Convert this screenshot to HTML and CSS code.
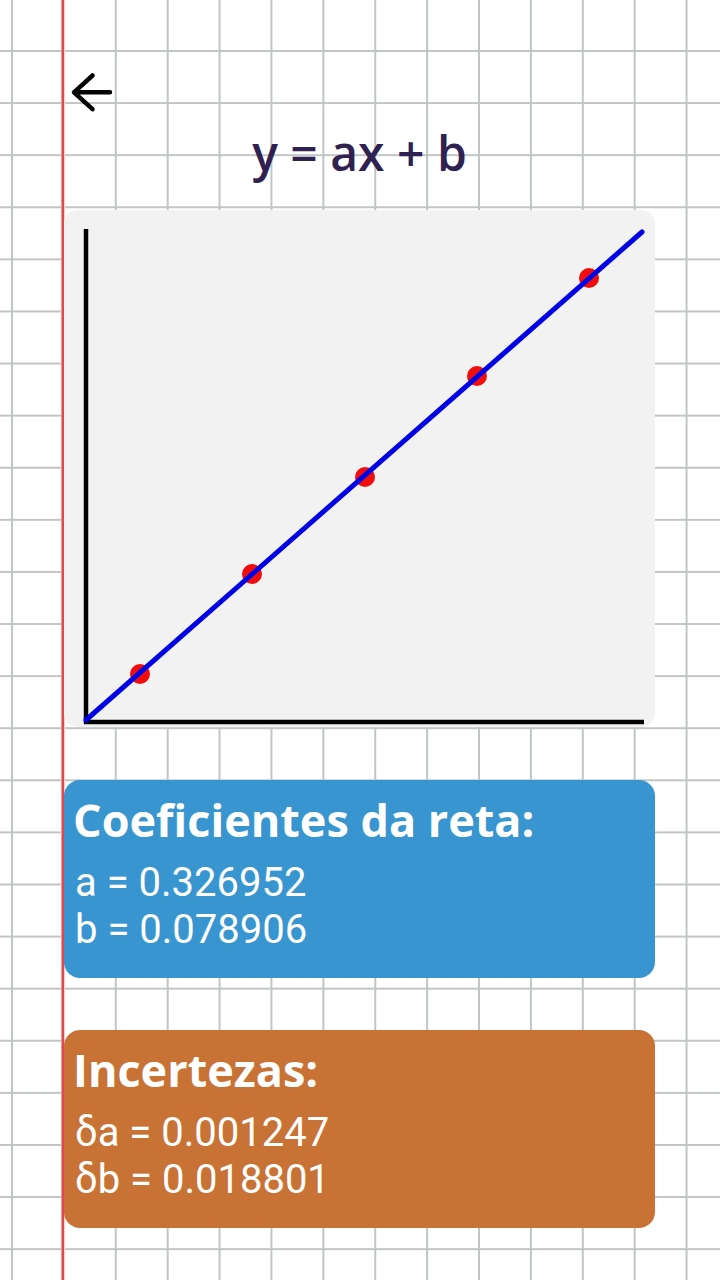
FILE: index.html
```html
<!DOCTYPE html>
<html lang="pt">
<head>
<meta charset="utf-8">
<title>y = ax + b</title>
<link rel="stylesheet" href="styles.css">
</head>
<body>
<div class="page">
  <div class="topbar">
    <svg class="back" width="48" height="48" viewBox="0 0 48 48" aria-label="Voltar">
      <path d="M42 24.3H6 M24.5 7.5L6 24.3L24.5 41.2" fill="none" stroke="#000" stroke-width="4.5" stroke-linecap="round" stroke-linejoin="round"/>
    </svg>
  </div>
  <h1 class="title">y = ax + b</h1>
  <div class="chart-card">
    <svg class="chart" width="591" height="517" viewBox="0 0 591 517">
      <line x1="22" y1="19" x2="22" y2="514" stroke="#000" stroke-width="4.5"/>
      <line x1="20" y1="512" x2="580" y2="512" stroke="#000" stroke-width="4.5"/>
      <g fill="#f20d0d">
        <circle cx="76" cy="464" r="10"/>
        <circle cx="188" cy="364" r="10"/>
        <circle cx="301" cy="267" r="10"/>
        <circle cx="413" cy="166" r="10"/>
        <circle cx="525" cy="68" r="10"/>
      </g>
      <line x1="22" y1="510" x2="578" y2="22" stroke="#0000e6" stroke-width="5" stroke-linecap="round"/>
    </svg>
  </div>
  <div class="info-card info-blue">
    <div class="info-title">Coeficientes da reta:</div>
    <p class="info-values">a = 0.326952<br>b = 0.078906</p>
  </div>
  <div class="info-card info-orange">
    <div class="info-title">Incertezas:</div>
    <p class="info-values">δa = 0.001247<br>δb = 0.018801</p>
  </div>
</div>
</body>
</html>
```

FILE: styles.css
```css
html {
  background: #ffffff;
}
body {
  margin: 0;
  min-height: 1280px;
  font-family: "Open Sans", "Noto Sans", sans-serif;
  background-color: #ffffff;
  background-image:
    linear-gradient(to right, transparent 61px, #f7c4c4 61px, #e0484a 62.5px, #e0484a 63.5px, #f7cccc 64.5px, transparent 65.5px),
    linear-gradient(to right, #bfc6c5 2px, transparent 2px),
    linear-gradient(to bottom, #bfc6c5 2px, transparent 2px);
  background-size: 720px 1280px, 51.9px 52.1px, 51.9px 52.1px;
  background-position: 0 0, 11px 0, 0 50px;
  background-repeat: no-repeat, repeat, repeat;
}
.page {
  padding: 0 65px 0 64px;
}
.topbar {
  padding-top: 68px;
  padding-left: 4px;
  height: 48px;
}
.back {
  display: block;
}
.title {
  margin: 9px 0 0;
  text-align: center;
  font-size: 48px;
  line-height: 56px;
  font-weight: 600;
  color: #2f2150;
}
.chart-card {
  margin-top: 29px;
  height: 517px;
  background: #f2f2f2;
  border-radius: 14px;
  overflow: hidden;
}
.chart {
  display: block;
}
.info-card {
  height: 198px;
  box-sizing: border-box;
  border-radius: 16px;
  padding: 14px 9px 0;
  color: #ffffff;
}
.info-blue {
  margin-top: 53px;
  background: #3895cf;
}
.info-orange {
  margin-top: 52px;
  background: #c87335;
}
.info-title {
  font-size: 45px;
  line-height: 52px;
  font-weight: 700;
}
.info-values {
  margin: 13px 0 0 2px;
  font-family: Roboto, "Open Sans", sans-serif;
  font-size: 40px;
  line-height: 47px;
  font-weight: 400;
}
```
